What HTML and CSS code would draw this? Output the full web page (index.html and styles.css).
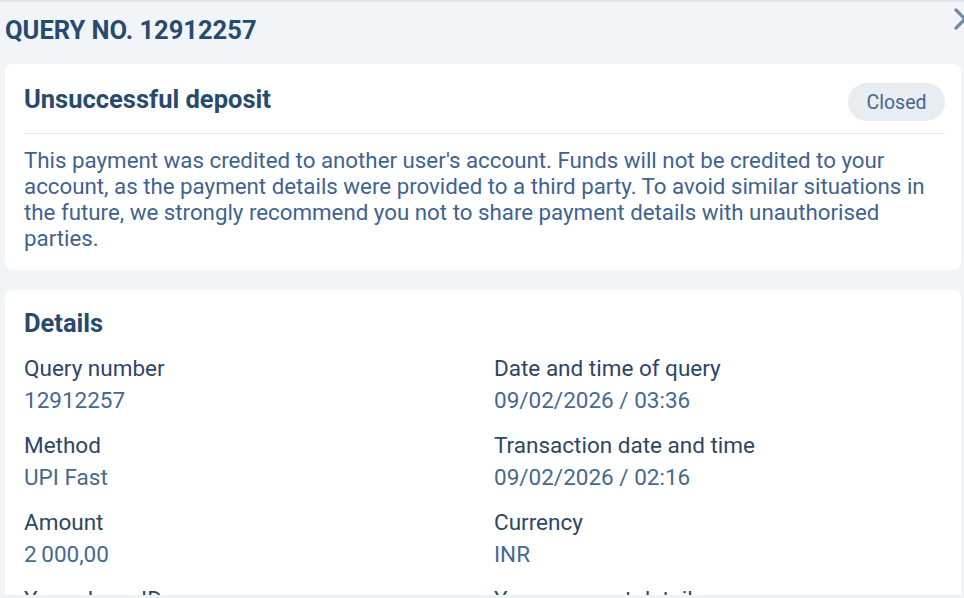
FILE: index.html
```html
<!DOCTYPE html>
<html lang="en">
<head>
<meta charset="utf-8">
<title>Query No. 12912257</title>
<link rel="stylesheet" href="styles.css">
</head>
<body>
<div class="modal">
  <button class="close" aria-label="Close">
    <svg width="24" height="24" viewBox="0 0 24 24"><path d="M3 3 L21 21 M21 3 L3 21" stroke="#7189a4" stroke-width="3.2" stroke-linecap="round" fill="none"/></svg>
  </button>
  <h1 class="modal-title">QUERY NO. 12912257</h1>
  <section class="card">
    <div class="card-head">
      <h2 class="card-title">Unsuccessful deposit</h2>
      <span class="badge">Closed</span>
    </div>
    <p class="message">This payment was credited to another user's account. Funds will not be credited to your account, as the payment details were provided to a third party. To avoid similar situations in the future, we strongly recommend you not to share payment details with unauthorised parties.</p>
  </section>
  <section class="card details">
    <h2 class="card-title">Details</h2>
    <dl class="grid">
      <div class="item"><dt>Query number</dt><dd>12912257</dd></div>
      <div class="item"><dt>Date and time of query</dt><dd>09/02/2026 / 03:36</dd></div>
      <div class="item"><dt>Method</dt><dd>UPI Fast</dd></div>
      <div class="item"><dt>Transaction date and time</dt><dd>09/02/2026 / 02:16</dd></div>
      <div class="item"><dt>Amount</dt><dd>2&#8201;000,00</dd></div>
      <div class="item"><dt>Currency</dt><dd>INR</dd></div>
      <div class="item"><dt>Your player ID</dt><dd>—</dd></div>
      <div class="item"><dt>Your payment details</dt><dd>—</dd></div>
    </dl>
  </section>
</div>
</body>
</html>
```

FILE: styles.css
```css
* { box-sizing: border-box; }
html, body {
  margin: 0;
  padding: 0;
  background: #eef2f5;
}
body {
  font-family: Roboto, "Liberation Sans", Arial, sans-serif;
  height: 598px;
  overflow: hidden;
}
.modal {
  position: relative;
  height: 595px;
  overflow: hidden;
  background: #f2f5f8;
  padding: 0 3px 0 5px;
  box-shadow: inset 0 3px 3px -2px rgba(120, 140, 160, 0.25);
}
.close {
  position: absolute;
  top: 7px;
  right: -13px;
  width: 24px;
  height: 24px;
  padding: 0;
  border: 0;
  background: none;
}
.close svg { display: block; }
.modal-title {
  margin: 0;
  padding: 15px 0 0;
  height: 64px;
  font-size: 25.5px;
  line-height: 30px;
  font-weight: 700;
  color: #284a6e;
}
.card {
  background: #ffffff;
  border-radius: 8px;
  padding: 19px 16px 19px 19px;
  margin-bottom: 20px;
}
.card-head {
  display: flex;
  justify-content: space-between;
  align-items: flex-start;
  padding-bottom: 12px;
  border-bottom: 1px solid #e6ebef;
}
.card-title {
  margin: 0;
  font-size: 25.5px;
  line-height: 32px;
  font-weight: 700;
  color: #284a6e;
}
.badge {
  display: inline-flex;
  align-items: center;
  justify-content: center;
  height: 38px;
  width: 97px;
  border-radius: 19px;
  background: #e8edf1;
  color: #44678f;
  font-size: 19.5px;
}
.message {
  margin: 0;
  padding-top: 13px;
  font-size: 22.3px;
  line-height: 26px;
  color: #3f6390;
}
.details .card-title {
  line-height: 28px;
}
.grid {
  display: grid;
  grid-template-columns: 470px 1fr;
  row-gap: 21px;
  margin: 19px 0 0;
}
.item dt {
  font-size: 22.5px;
  line-height: 24px;
  color: #2c4666;
}
.item dd {
  margin: 8px 0 0;
  font-size: 22.5px;
  line-height: 24px;
  color: #46698f;
}
```
